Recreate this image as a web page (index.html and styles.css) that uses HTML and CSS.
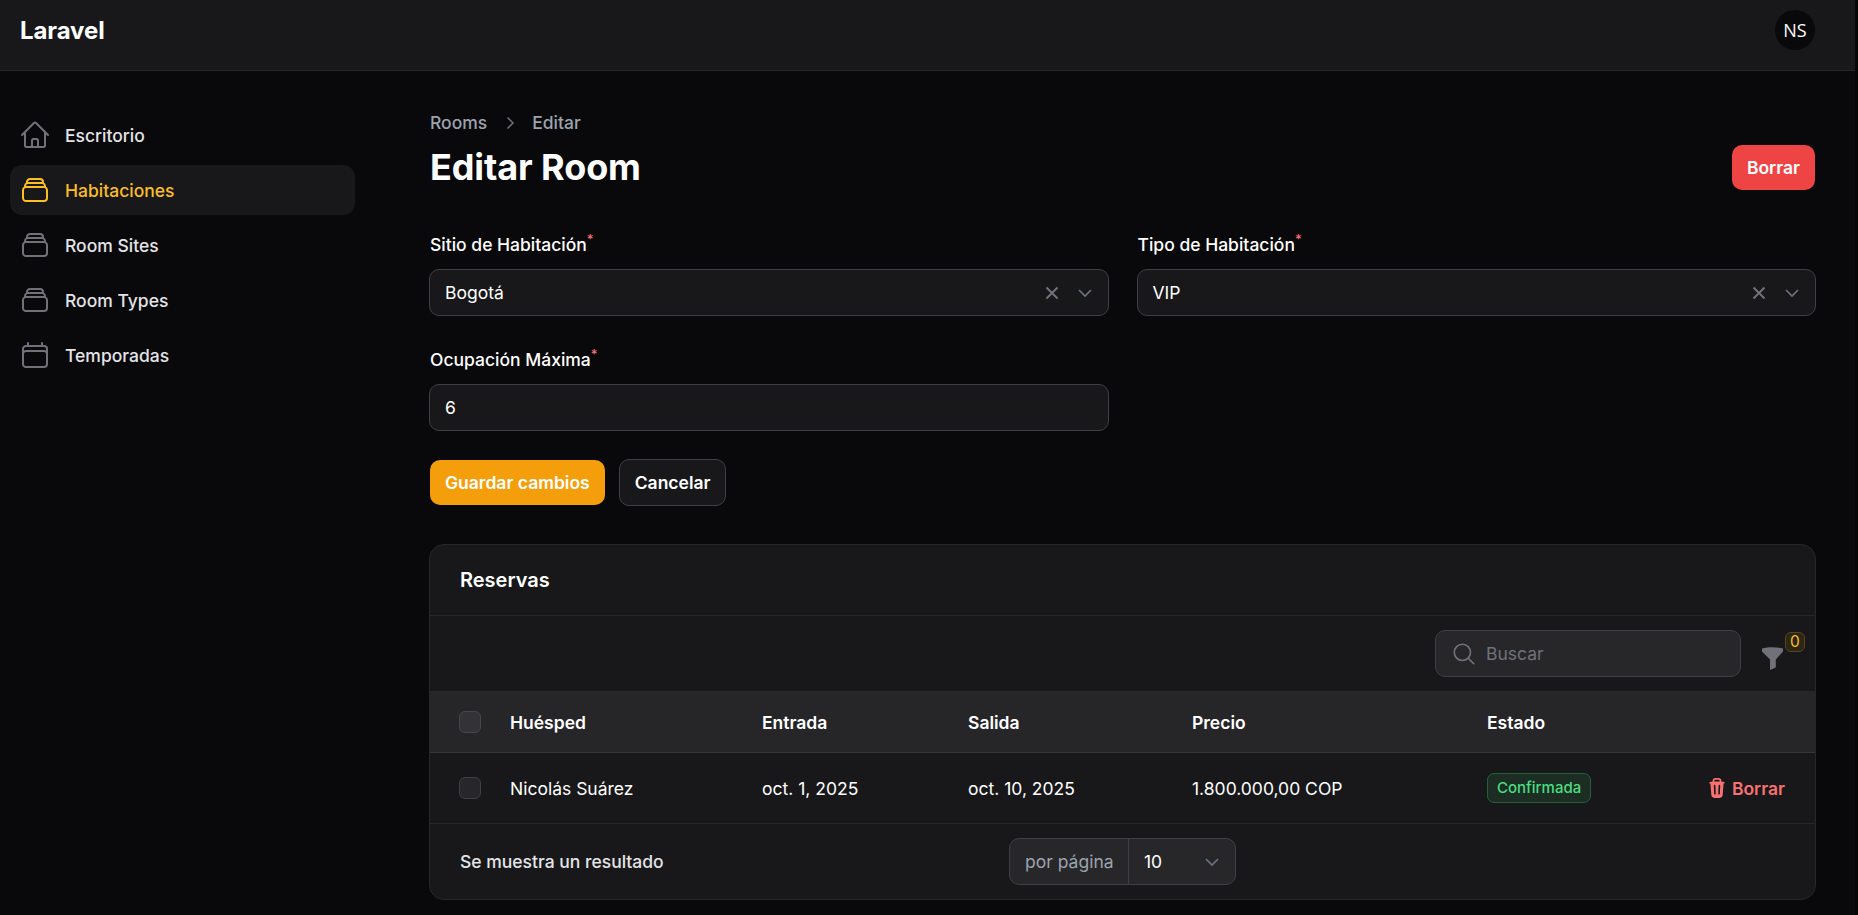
FILE: index.html
```html
<!DOCTYPE html>
<html lang="es">
<head>
<meta charset="utf-8">
<title>Editar Room</title>
<link rel="stylesheet" href="styles.css">
</head>
<body>
<div class="page">
  <header class="topbar">
    <a class="brand">Laravel</a>
    <div class="avatar">NS</div>
  </header>
  <div class="layout">
    <nav class="sidebar">
      <a class="nav-item">
        <svg class="nav-icon" viewBox="0 0 24 24"><path d="m2.25 12 8.954-8.955c.44-.439 1.152-.439 1.591 0L21.75 12M4.5 9.75v10.125c0 .621.504 1.125 1.125 1.125H9.75v-4.875c0-.621.504-1.125 1.125-1.125h2.25c.621 0 1.125.504 1.125 1.125V21h4.125c.621 0 1.125-.504 1.125-1.125V9.75M8.25 21h8.25"/></svg>
        <span class="nav-text">Escritorio</span>
      </a>
      <a class="nav-item active">
        <svg class="nav-icon" viewBox="0 0 24 24"><path d="M6 6.878V6a2.25 2.25 0 0 1 2.25-2.25h7.5A2.25 2.25 0 0 1 18 6v.878m-12 0c.235-.083.487-.128.75-.128h10.5c.263 0 .515.045.75.128m-12 0A2.25 2.25 0 0 0 4.5 9v.878m13.5-3A2.25 2.25 0 0 1 19.5 9v.878m0 0a2.246 2.246 0 0 0-.75-.128H5.25c-.263 0-.515.045-.75.128m15 0A2.25 2.25 0 0 1 21 12v6a2.25 2.25 0 0 1-2.25 2.25H5.25A2.25 2.25 0 0 1 3 18v-6c0-.98.626-1.813 1.5-2.122"/></svg>
        <span class="nav-text">Habitaciones</span>
      </a>
      <a class="nav-item">
        <svg class="nav-icon" viewBox="0 0 24 24"><path d="M6 6.878V6a2.25 2.25 0 0 1 2.25-2.25h7.5A2.25 2.25 0 0 1 18 6v.878m-12 0c.235-.083.487-.128.75-.128h10.5c.263 0 .515.045.75.128m-12 0A2.25 2.25 0 0 0 4.5 9v.878m13.5-3A2.25 2.25 0 0 1 19.5 9v.878m0 0a2.246 2.246 0 0 0-.75-.128H5.25c-.263 0-.515.045-.75.128m15 0A2.25 2.25 0 0 1 21 12v6a2.25 2.25 0 0 1-2.25 2.25H5.25A2.25 2.25 0 0 1 3 18v-6c0-.98.626-1.813 1.5-2.122"/></svg>
        <span class="nav-text">Room Sites</span>
      </a>
      <a class="nav-item">
        <svg class="nav-icon" viewBox="0 0 24 24"><path d="M6 6.878V6a2.25 2.25 0 0 1 2.25-2.25h7.5A2.25 2.25 0 0 1 18 6v.878m-12 0c.235-.083.487-.128.75-.128h10.5c.263 0 .515.045.75.128m-12 0A2.25 2.25 0 0 0 4.5 9v.878m13.5-3A2.25 2.25 0 0 1 19.5 9v.878m0 0a2.246 2.246 0 0 0-.75-.128H5.25c-.263 0-.515.045-.75.128m15 0A2.25 2.25 0 0 1 21 12v6a2.25 2.25 0 0 1-2.25 2.25H5.25A2.25 2.25 0 0 1 3 18v-6c0-.98.626-1.813 1.5-2.122"/></svg>
        <span class="nav-text">Room Types</span>
      </a>
      <a class="nav-item">
        <svg class="nav-icon" viewBox="0 0 24 24"><path d="M6.75 3v2.25M17.25 3v2.25M3 18.75V7.5a2.25 2.25 0 0 1 2.25-2.25h13.5A2.25 2.25 0 0 1 21 7.5v11.25m-18 0A2.25 2.25 0 0 0 5.25 21h13.5A2.25 2.25 0 0 0 21 18.75m-18 0v-7.5A2.25 2.25 0 0 1 5.25 9h13.5A2.25 2.25 0 0 1 21 11.25v7.5"/></svg>
        <span class="nav-text">Temporadas</span>
      </a>
    </nav>
    <main class="main">
      <div class="page-head">
        <div class="head-text">
          <div class="crumbs">
            <span>Rooms</span>
            <svg class="crumb-sep" viewBox="0 0 20 20"><path d="m7.5 4.5 5.500 5.500-5.500 5.500"/></svg>
            <span>Editar</span>
          </div>
          <h1 class="title">Editar Room</h1>
        </div>
        <button class="btn btn-danger">Borrar</button>
      </div>

      <form class="form-grid">
        <div class="field">
          <label class="label">Sitio de Habitación<sup class="req">*</sup></label>
          <div class="control">
            <span class="value">Bogotá</span>
            <svg class="clear" viewBox="0 0 20 20"><path d="M4.500 4.500l11 11M15.500 4.500l-11 11"/></svg>
            <svg class="chev" viewBox="0 0 20 20"><path d="m5 7.500 5 5 5-5"/></svg>
          </div>
        </div>
        <div class="field">
          <label class="label">Tipo de Habitación<sup class="req">*</sup></label>
          <div class="control">
            <span class="value">VIP</span>
            <svg class="clear" viewBox="0 0 20 20"><path d="M4.500 4.500l11 11M15.500 4.500l-11 11"/></svg>
            <svg class="chev" viewBox="0 0 20 20"><path d="m5 7.500 5 5 5-5"/></svg>
          </div>
        </div>
        <div class="field">
          <label class="label">Ocupación Máxima<sup class="req">*</sup></label>
          <div class="control"><span class="value">6</span></div>
        </div>
      </form>

      <div class="actions">
        <button class="btn btn-primary">Guardar cambios</button>
        <button class="btn btn-ghost">Cancelar</button>
      </div>

      <section class="card">
        <h2 class="card-title">Reservas</h2>
        <div class="toolbar">
          <div class="search">
            <svg class="search-icon" viewBox="0 0 24 24"><path d="m21 21-5.197-5.197m0 0A7.500 7.500 0 1 0 5.196 5.196a7.500 7.500 0 0 0 10.607 10.607Z"/></svg>
            <span class="search-text">Buscar</span>
          </div>
          <div class="filter">
            <svg class="filter-icon" viewBox="0 0 21 23"><path d="M0 1.500 C6 -.2 15 -.2 21 1.500 V4.500 L13.800 12.500 V20.500 L8 23 V12.500 L0 4.500 Z"/></svg>
            <span class="filter-badge">0</span>
          </div>
        </div>
        <div class="row row-head">
          <span class="check"></span>
          <span class="cell">Huésped</span>
          <span class="cell">Entrada</span>
          <span class="cell">Salida</span>
          <span class="cell">Precio</span>
          <span class="cell">Estado</span>
          <span></span>
        </div>
        <div class="row row-body">
          <span class="check"></span>
          <span class="cell">Nicolás Suárez</span>
          <span class="cell">oct. 1, 2025</span>
          <span class="cell">oct. 10, 2025</span>
          <span class="cell">1.800.000,00 COP</span>
          <span class="badge-cell"><span class="badge">Confirmada</span></span>
          <a class="row-action">
            <svg class="trash" viewBox="0 0 20 20"><path fill-rule="evenodd" d="M8.750 1A2.750 2.750 0 0 0 6 3.750v.443c-.795.077-1.584.176-2.365.298a.75.75 0 1 0 .23 1.482l.149-.022.841 10.518A2.750 2.750 0 0 0 7.596 19h4.807a2.750 2.750 0 0 0 2.742-2.530l.841-10.520.149.023a.75.75 0 0 0 .23-1.482A41.030 41.030 0 0 0 14 4.193V3.750A2.750 2.750 0 0 0 11.250 1h-2.500ZM10 4c.84 0 1.673.025 2.500.075V3.750c0-.69-.56-1.250-1.250-1.250h-2.500c-.69 0-1.250.56-1.250 1.250v.325C8.327 4.025 9.160 4 10 4ZM8.580 7.720a.75.75 0 0 0-1.500.06l.3 7.500a.75.75 0 1 0 1.500-.06l-.3-7.500Zm4.340.06a.75.75 0 1 0-1.500-.06l-.3 7.500a.75.75 0 1 0 1.500.06l.3-7.500Z"/></svg>
            <span class="cell">Borrar</span>
          </a>
        </div>
        <div class="card-foot">
          <span class="count">Se muestra un resultado</span>
          <div class="perpage">
            <span class="perpage-label">por página</span>
            <div class="perpage-select">
              <span>10</span>
              <svg class="chev" viewBox="0 0 20 20"><path d="m5 7.500 5 5 5-5"/></svg>
            </div>
          </div>
          <span></span>
        </div>
      </section>
    </main>
  </div>
</div>
</body>
</html>
```

FILE: styles.css
```css
* { box-sizing: border-box; }
html, body { margin: 0; height: 100%; }
body {
  background: #050506;
  color: #fff;
  font-family: Inter, "Liberation Sans", sans-serif;
  font-size: 17.5px;
  line-height: 24px;
  overflow: hidden;
}
.page {
  width: 1855px;
  height: 915px;
  background: #09090b;
}
.topbar {
  height: 71px;
  background: #18181b;
  border-bottom: 1px solid #27272a;
  display: flex;
  justify-content: space-between;
  padding: 10px 40px 0 20px;
}
.brand {
  font-size: 24px;
  font-weight: 700;
  line-height: 30px;
  letter-spacing: -0.1px;
  margin-top: 6px;
}
.avatar {
  width: 40px;
  height: 40px;
  border-radius: 50%;
  background: #09090b;
  display: flex;
  align-items: center;
  justify-content: center;
  font-family: "Open Sans", sans-serif;
  font-size: 18px;
}
.layout { display: flex; }
.sidebar {
  width: 390px;
  flex: none;
  padding: 39px 35px 0 10px;
  display: flex;
  flex-direction: column;
  gap: 5px;
}
.nav-item {
  height: 50px;
  border-radius: 12px;
  display: flex;
  align-items: center;
  gap: 14px;
  padding-left: 9px;
  color: #e4e4e7;
  font-weight: 500;
}
.nav-item.active { background: #18181b; color: #fbbf24; }
.nav-text { padding-top: 1px; }
.nav-icon {
  width: 32px;
  height: 32px;
  flex: none;
  fill: none;
  stroke: #71717a;
  stroke-width: 1.5;
  stroke-linecap: round;
  stroke-linejoin: round;
}
.active .nav-icon { stroke: #fbbf24; }
.main {
  flex: 1;
  min-width: 0;
  padding: 37px 39px 0;
}
.page-head {
  display: flex;
  justify-content: space-between;
  align-items: flex-end;
  height: 82px;
}
.head-text { padding-left: 1px; }
.crumbs {
  display: flex;
  align-items: center;
  gap: 12.5px;
  color: #9ca3af;
  font-weight: 500;
}
.crumb-sep {
  width: 20px;
  height: 20px;
  fill: none;
  stroke: #71717a;
  stroke-width: 1.5;
}
.title {
  margin: 9px 0 0;
  font-size: 36px;
  line-height: 46px;
  font-weight: 700;
  letter-spacing: -0.1px;
}
.btn {
  border: 0;
  border-radius: 10px;
  height: 45px;
  padding: 0 15px;
  font: 600 17.5px/24px Inter, "Liberation Sans", sans-serif;
  color: #fff;
}
.btn-danger { background: #ef4444; margin-right: 1px; }
.btn-primary { background: #f59e0b; }
.btn-ghost {
  background: #18181b;
  border: 1px solid #3f3f46;
  height: 47px;
}
.form-grid {
  margin-top: 43px;
  display: grid;
  grid-template-columns: 1fr 1fr;
  column-gap: 28px;
  row-gap: 32px;
}
.field { display: flex; flex-direction: column; gap: 12px; }
.label { font-weight: 500; line-height: 24px; height: 24px; padding-left: 1px; }
.req {
  color: #f87171;
  font-size: 13px;
  line-height: 0;
  font-weight: 500;
}
.control {
  height: 47px;
  background: #18181b;
  border: 1px solid #3f3f46;
  border-radius: 10px;
  display: flex;
  align-items: center;
  padding: 0 11px 0 15px;
  color: #fff;
}
.value { flex: 1; }
.clear {
  width: 20px;
  height: 20px;
  fill: none;
  stroke: #71717a;
  stroke-width: 2;
  margin-right: 11px;
}
.chev {
  width: 24px;
  height: 24px;
  fill: none;
  stroke: #6b7280;
  stroke-width: 1.4;
}
.actions {
  display: flex;
  align-items: center;
  gap: 14px;
  margin-top: 28px;
  padding-left: 1px;
}
.card {
  margin-top: 38px;
  height: 356px;
  background: #18181b;
  border: 1px solid #27272a;
  border-radius: 15px;
  overflow: hidden;
}
.card-title {
  margin: 0;
  height: 71px;
  padding: 0 30px;
  display: flex;
  align-items: center;
  font-size: 20px;
  font-weight: 600;
  border-bottom: 1px solid #27272a;
}
.toolbar {
  height: 76px;
  display: flex;
  align-items: center;
  justify-content: flex-end;
  padding-right: 10px;
  gap: 20px;
  border-bottom: 1px solid #27272a;
}
.search {
  width: 306px;
  height: 47px;
  background: #27272a;
  border: 1px solid #3f3f46;
  border-radius: 10px;
  display: flex;
  align-items: center;
  gap: 9px;
  padding-left: 15px;
}
.search-icon {
  width: 26px;
  height: 26px;
  fill: none;
  stroke: #71717a;
  stroke-width: 1.5;
  stroke-linecap: round;
}
.search-text { color: #71717a; }
.filter { display: flex; width: 44px; height: 44px; position: relative; align-items: center; }
.filter-icon { width: 21px; height: 23px; fill: #71717a; margin: 10px 0 0 1px; }
.filter-badge {
  position: absolute;
  right: 0;
  top: 0;
  width: 20px;
  height: 20px;
  border: 1px solid #5c451a;
  background: #2c2617;
  border-radius: 6px;
  color: #fbbf24;
  font-size: 15.5px;
  line-height: 18px;
  text-align: center;
}
.row {
  display: grid;
  grid-template-columns: 51px 252px 206px 224px 295px 1fr auto;
  align-items: center;
  padding: 0 30px 0 29px;
  border-bottom: 1px solid #27272a;
}
.cell { padding-top: 2px; }
.row-head {
  height: 61px;
  background: #262629;
  font-weight: 600;
  border-bottom-color: #37373b;
}
.row-body { height: 71px; }
.check {
  width: 22px;
  height: 22px;
  background: #333336;
  border: 1px solid #46464c;
  border-radius: 6px;
}
.row-body .check { background: #27272a; border-color: #3f3f46; }
.badge-cell { display: flex; }
.badge {
  padding: 0 9px;
  height: 30px;
  line-height: 28px;
  font-size: 15px;
  font-weight: 500;
  color: #4ade80;
  background: #1c2d23;
  border: 1px solid #25603a;
  border-radius: 7px;
}
.row-action {
  display: flex;
  align-items: center;
  gap: 4px;
  color: #f87171;
  font-weight: 600;
}
.trash { width: 22px; height: 22px; fill: #f87171; }
.card-foot {
  height: 75px;
  display: grid;
  grid-template-columns: 1fr auto 1fr;
  align-items: center;
  padding: 0 30px;
}
.count { color: #e4e4e7; font-weight: 500; }
.perpage {
  height: 47px;
  width: 227px;
  display: flex;
  background: #27272a;
  border: 1px solid #3f3f46;
  border-radius: 10px;
}
.perpage-label {
  width: 119px;
  flex: none;
  border-right: 1px solid #3f3f46;
  color: #9ca3af;
  line-height: 45px;
  padding-left: 15px;
}
.perpage-select {
  flex: 1;
  display: flex;
  align-items: center;
  justify-content: space-between;
  padding: 0 11px 0 15px;
}
```
